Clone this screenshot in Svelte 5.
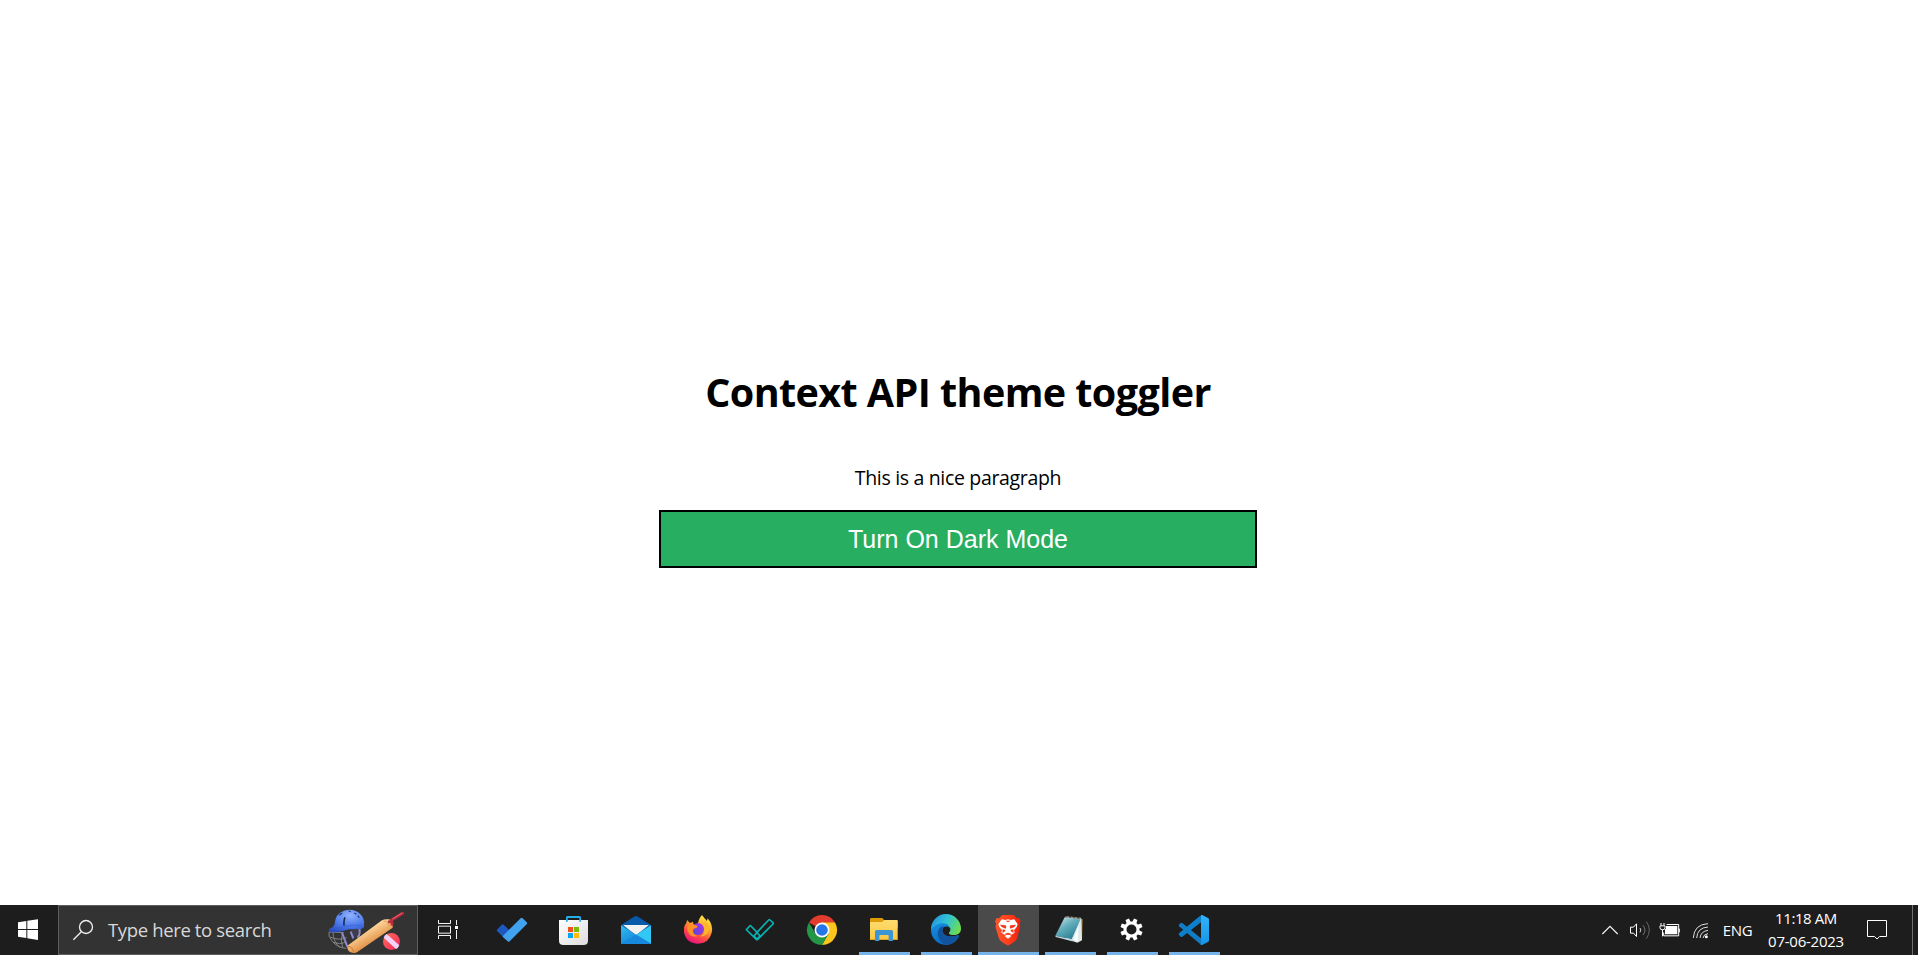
<script>
  let dark = $state(false);
</script>

<div class="screen">
  <main class:dark>
    <section class="panel">
      <h1>Context API theme toggler</h1>
      <p>This is a nice paragraph</p>
      <button onclick={() => (dark = !dark)}>Turn {dark ? 'Off' : 'On'} Dark Mode</button>
    </section>
  </main>

  <footer class="taskbar">
    <div class="start">
      <svg width="58" height="50" viewBox="0 30 174 150">
        <path fill="#fff" d="M54 82l25-4v24H54zM82 77.500l32-4.500v29H82zM54 105h25v24l-25-4zM82 105h32v30l-32-5z" />
      </svg>
    </div>

    <div class="search">
      <svg class="glass" width="50" height="48" viewBox="177 33 150 144">
        <g fill="none" stroke="#f0f0f0" stroke-width="4">
          <circle cx="258" cy="96" r="19.500" /><path d="M244 110l-24 24" />
        </g>
      </svg>
      <span>Type here to search</span>
      <svg class="cricket" width="80" height="48" viewBox="321 33 240 144">
        <defs>
          <radialGradient id="helmet" cx=".6" cy=".25" r=".8"><stop offset="0" stop-color="#8fb2ff" /><stop offset=".6" stop-color="#4c78ea" /><stop offset="1" stop-color="#2c50c4" /></radialGradient>
          <linearGradient id="bat" x1="0" y1="0" x2=".6" y2=".8"><stop offset="0" stop-color="#e89a4c" /><stop offset=".5" stop-color="#ffd49a" /><stop offset="1" stop-color="#d98233" /></linearGradient>
          <linearGradient id="ball" x1="0" y1="0" x2="1" y2="1"><stop offset="0" stop-color="#ff7058" /><stop offset="1" stop-color="#f4245c" /></linearGradient>
        </defs>
        <path d="M327 111q-4 12 10 28 16 20 42 21M339 112q0 28 22 46M330 126q28 12 50 2M340 142q18 8 38 0M368 112q-8 24 0 46M327 111l44 2" fill="none" stroke="#8d9193" stroke-width="2.500" />
        <path d="M392 104q12-2 24-4 4 18-8 26l-12 8z" fill="#3c3d49" />
        <path d="M366 113l16 42M417 97q6 16-4 31M392 110l8 20" fill="none" stroke="#8f87cc" stroke-width="6" />
        <path d="M327 104q14-8 17-18 2-30 28-39 28-8 46 8 18 14 14 40-1 6-10 7-38-2-56 7-24 5-39 1z" fill="url(#helmet)" />
        <path d="M328 100q26 3 48-6 20-6 50-3" fill="none" stroke="#3560cf" stroke-width="2" />
        <path d="M375 67q-4 8-3 25" fill="none" stroke="#14264f" stroke-width="4.500" />
        <path d="M358 61q4-6 9-6M386 47l6 3M403 54l6 4M413 62l5 6" fill="none" stroke="#1c3674" stroke-width="3.500" />
        <path d="M382 152L486 76q8-5 20-3 12 2 12 12v13L412 171q-8 6-22 0-9-6-8-19z" fill="url(#bat)" />
        <path d="M490 78q14 0 19 17" fill="none" stroke="#d58a44" stroke-width="2" />
        <path d="M384 154q15 2 17 18" fill="none" stroke="#c67a35" stroke-width="3" />
        <path d="M508 80q10-2 8 8M515 75l33-20" fill="none" stroke="#b92d3e" stroke-width="9" stroke-linecap="round" />
        <path d="M517 72l29-18" stroke="#f36069" stroke-width="3" />
        <circle cx="514.500" cy="139.500" r="25.500" fill="url(#ball)" />
        <path d="M491 128q3-8 9-11l38 34q-3 8-10 11z" fill="#f3d3fa" />
      </svg>
    </div>

    <nav class="apps">
      <div class="app">
        <svg width="63" height="50" viewBox="594 30 189 150">
          <path d="M655.500 75v10.500h36V75M655.500 132v-10.500h36V132M655.500 93.500h36v21h-36zM709.500 75v15M709.500 105v27" fill="none" stroke="#f4f4f4" stroke-width="3" />
          <path d="M705 93h9v9h-9z" fill="#fff" />
        </svg>
      </div>
      <div class="app">
        <svg width="62" height="50" viewBox="3 30 186 150">
          <path d="M51 104l14-15q3-3 6 0l25 24-16 20q-4 1-7-3l-21-21q-3-2-1-5z" fill="#1e57bd" />
          <path d="M69 122l53-52q3-3 6 0l12 12q3 3 0 6l-51 51q-3 3-6 0l-14-13q-2-2 0-4z" fill="#41a2ef" />
        </svg>
      </div>
      <div class="app">
        <svg width="62" height="50" viewBox="189 30 186 150">
          <defs><linearGradient id="bag" x1="0" y1="0" x2="1" y2="1"><stop stop-color="#fff" /><stop offset="1" stop-color="#dcdcdc" /></linearGradient></defs>
          <path d="M237 75h87v62q0 13-13 13h-61q-13 0-13-13z" fill="url(#bag)" />
          <path d="M260.500 80V68q0-2 2-2h36q2 0 2 2v12" fill="none" stroke="#24aeea" stroke-width="5.500" />
          <path d="M264 96h15v15h-15z" fill="#f25022" /><path d="M282 96h15v15h-15z" fill="#7fba00" />
          <path d="M264 114h15v15h-15z" fill="#00a4ef" /><path d="M282 114h15v15h-15z" fill="#ffb900" />
        </svg>
      </div>
      <div class="app">
        <svg width="62" height="50" viewBox="375 30 186 150">
          <defs><linearGradient id="mail" x1="0" y1="0" x2=".8" y2="1"><stop stop-color="#2fc0f4" /><stop offset="1" stop-color="#0d72cf" /></linearGradient></defs>
          <path d="M423 90l39-25q6-4 12 0l39 25v20h-90z" fill="#0859a8" />
          <path d="M429 90h78l-39 31z" fill="#f1f1f1" />
          <path d="M423 91l90 56h-90z" fill="url(#mail)" />
          <path d="M513 91v56l-45-28z" fill="#31c8f5" />
          <path d="M423 147l45-28 45 28z" fill="#1688dd" />
        </svg>
      </div>
      <div class="app">
        <svg width="62" height="50" viewBox="21 30 186 150">
          <defs>
            <linearGradient id="fox" x1=".8" y1="0" x2=".3" y2="1"><stop stop-color="#fff04a" /><stop offset=".38" stop-color="#ffab27" /><stop offset=".68" stop-color="#ff5140" /><stop offset="1" stop-color="#e80d87" /></linearGradient>
            <linearGradient id="globe" x1="1" y1="0" x2="0" y2="1"><stop stop-color="#b432e3" /><stop offset="1" stop-color="#5147d9" /></linearGradient>
          </defs>
          <path d="M126 60q7 10 15 18l2-8q18 22 12 43-8 32-41 33-35 0-42-34-2-19 7-28l2-9 9 9 9-4q0 8 4 11l11 3q-1-21 12-34z" fill="url(#fox)" />
          <circle cx="114" cy="102" r="18" fill="url(#globe)" />
          <path d="M83 91q10-7 20-2l11 5q-5 8-14 8-4 17 13 21-21 7-30-14-3-9 0-18z" fill="#ff9127" />
          <path d="M112 83q18-2 21 17 3 18-13 25 28-3 27-26-2-14-12-22-3 2-1 9-8-6-22-3z" fill="#ffb52c" />
        </svg>
      </div>
      <div class="app">
        <svg width="62" height="50" viewBox="207 30 186 150">
          <g fill="none" stroke="#08b3b1" stroke-width="5" stroke-linejoin="round">
            <path d="M260 103l9-10q2-2 4 0l18 19 35-37q2-2 4 0l9 8q2 2 0 4l-46 46q-2 2-4 0l-29-28q-2-1 0-2z" />
            <path d="M282 123l9-10 9 10-9 9z" />
          </g>
        </svg>
      </div>
      <div class="app">
        <svg width="62" height="50" viewBox="393 30 186 150">
          <path d="M486 105L447 82.500A45 45 0 0 1 525 82.500z" fill="#e33b2e" />
          <path d="M486 82.500h39A45 45 0 0 1 486 150l19.500-34z" fill="#fcc51c" />
          <path d="M447 82.500l19.500 33.700q10 14 39 0L486 150A45 45 0 0 1 447 82.500z" fill="#239746" />
          <circle cx="486" cy="105" r="22.500" fill="#fff" /><circle cx="486" cy="105" r="17.500" fill="#2676e9" />
        </svg>
      </div>
      <div class="app open">
        <svg width="62" height="50" viewBox="39 30 186 150">
          <defs><linearGradient id="folder" x1="0" y1="0" x2="0" y2="1"><stop stop-color="#ffdc70" /><stop offset="1" stop-color="#f9c842" /></linearGradient></defs>
          <path d="M90 73q0-4 4-4h31q3 0 5 3l2 4h38q3 0 3 3v20H90z" fill="#dd9b08" />
          <path d="M90 81h36l7-6h37q3 0 3 3v54q0 3-3 3H93q-3 0-3-3z" fill="url(#folder)" />
          <path d="M90 132h83v3H90z" fill="#e2a51f" />
          <path d="M105 138v-28q0-5 5-5h44q5 0 5 5v28h-13v-16q0-2-3-2h-22q-3 0-3 2v16z" fill="#3c96d4" />
        </svg>
      </div>
      <div class="app open">
        <svg width="62" height="50" viewBox="225 30 186 150">
          <defs>
            <linearGradient id="edgeTop" x1="0" y1=".3" x2="1" y2=".7"><stop stop-color="#2295df" /><stop offset=".45" stop-color="#30c2d4" /><stop offset="1" stop-color="#72df49" /></linearGradient>
            <linearGradient id="edgeSide" x1=".2" y1="0" x2=".6" y2="1"><stop stop-color="#168ee0" /><stop offset="1" stop-color="#0867bd" /></linearGradient>
          </defs>
          <path d="M273 105C273 75 325 78 331 99C322 90 306 94 307 107C308 121 328 130 353 121Q358 120 356 126C348 142 333 150 318 150A45 45 0 0 1 273 105z" fill="url(#edgeSide)" />
          <path d="M312 93C290 96 284 128 314 149.500Q343 151 356 126Q358 120 353 121C328 130 308 121 307 107Q306 98 312 93z" fill="#11549d" />
          <path d="M273 103A45 45 0 0 1 363 101C363 116 350 121 337 120Q326 119 327 113Q332 108 331 101C326 82 296 76 273 103z" fill="url(#edgeTop)" />
        </svg>
      </div>
      <div class="app open active">
        <svg width="62" height="50" viewBox="411 30 186 150">
          <defs><linearGradient id="brave"><stop stop-color="#ff552c" /><stop offset=".5" stop-color="#ff401b" /><stop offset="1" stop-color="#ed210d" /></linearGradient></defs>
          <path d="M487 60h34l10 10 7-1 4 10-3 8 2 7-9 34q-2 8-10 13l-14 9q-4 2-8 0l-14-9q-8-5-10-13l-10-34 3-7-4-8 5-10 7 1z" fill="url(#brave)" />
          <path d="M485 73l11 2 8-2 8 2 11-2 10 15-3 8-8 10 2 7-10 6-10-5-10 5-10-6 2-7-8-10-3-8z" fill="#fff" />
          <path d="M504 117l10 6-10 8-10-8z" fill="#fff" />
          <path d="M480 89l17 2 2 4-2 6-12-5zM528 89l-17 2-2 4 2 6 12-5zM488 103l9 2-4 6-6 2zM520 103l-9 2 4 6 6 2zM496 77h16l-8 5zM495 116l9-3 9 3-9 4z" fill="#f43a1b" />
        </svg>
      </div>
      <div class="app open">
        <svg width="62" height="50" viewBox="57 30 186 150">
          <defs><linearGradient id="note" x1="0" y1="0" x2=".7" y2="1"><stop stop-color="#d7eff2" /><stop offset=".45" stop-color="#67b0bd" /><stop offset="1" stop-color="#237b91" /></linearGradient></defs>
          <path d="M181 70l7 3-2 60-15 8z" fill="#a97925" />
          <path d="M181 70l3 2 2 64-14 7-34-12z" fill="#dfe9e9" />
          <path d="M134 67l48 5-27 61-49-11z" fill="url(#note)" />
          <path d="M106 122l49 11 8 5-7 1-49-13z" fill="#bfd8dc" />
          <path d="M160 134l16-42-3 48z" fill="#fbffff" />
          <path d="M137 66l47 5" stroke="#d2c9b6" stroke-width="6" stroke-dasharray="2 2" />
        </svg>
      </div>
      <div class="app open">
        <svg width="62" height="50" viewBox="243 30 186 150">
          <circle cx="334.500" cy="103.500" r="19.500" fill="none" stroke="#fff" stroke-width="9" />
          {#each [22.5, 67.5, 112.5, 157.5, 202.5, 247.500, 292.5, 337.5] as angle}
            <path d="M328 82l1-12h11l1 12z" fill="#fff" transform="rotate({angle} 334.500 103.500)" />
          {/each}
        </svg>
      </div>
      <div class="app open">
        <svg width="62" height="50" viewBox="429 30 186 150">
          <defs><linearGradient id="code" x1="0" y1="0" x2="0" y2="1"><stop stop-color="#32b4f7" /><stop offset="1" stop-color="#1694e8" /></linearGradient></defs>
          <path d="M543 130l-56-46q-3-2-5 0l-5 5q-2 3 0 5l67 56z" fill="#127bc4" />
          <path d="M477 115q-2 3 0 5l5 5q3 2 5 0l58-45V60l-10 7z" fill="#0d7fcb" />
          <path d="M543 60q2-1 5 1l16 8q3 1 3 5v62q0 4-3 5l-16 8q-4 2-7-1l2-4z" fill="url(#code)" />
        </svg>
      </div>
    </nav>

    <div class="tray">
      <svg width="30" height="50" viewBox="45 30 90 150"><path d="M67 117l23-23 23 23" fill="none" stroke="#f4f4f4" stroke-width="3.500" /></svg>
      <svg width="30" height="50" viewBox="135 30 90 150">
        <g fill="none" stroke-width="3">
          <path d="M151.500 96.500h9l9-10v38l-9-10h-9z" stroke="#fff" />
          <path d="M180 99q5 6 0 13" stroke="#d0d0d0" />
          <path d="M189 91q12 14 0 29" stroke="#777" />
          <path d="M199 80q18 25 0 51" stroke="#656565" />
        </g>
      </svg>
      <svg width="30" height="50" viewBox="225 30 90 150">
        <path d="M260 88.500h36v34h-45v-10M298 101v11M243 84v7M252 84v7M240 92.500h15v6q0 6-7.500 6t-7.500-6zM247.500 104v20" fill="none" stroke="#fff" stroke-width="3" />
        <path d="M258 93h34v25h-37v-15l3-2z" fill="#fff" />
      </svg>
      <svg width="30" height="50" viewBox="315 30 90 150">
        <g fill="none" stroke="#ddd" stroke-width="3">
          <path d="M340 129q2-41 44-43M350 129q2-31 34-33M360 129q2-20 24-23" />
          <path d="M369 129q2-12 15-13" />
        </g>
        <circle cx="379" cy="125" r="4.500" fill="#fff" />
      </svg>
      <span class="lang">ENG</span>
      <div class="clock"><span class="time">11:18 AM</span><span class="date">07-06-2023</span></div>
      <svg width="50" height="50" viewBox="336 30 150 150">
        <path d="M382.500 76.500h57v48h-21l-7.500 7.500-7.500-7.500h-21z" fill="none" stroke="#fff" stroke-width="3" />
      </svg>
      <div class="peek"></div>
    </div>
  </footer>
</div>

<style>
  :global(body) { margin: 0; overflow: hidden; }
  .screen { height: 955px; display: flex; flex-direction: column; }
  main { flex: 1; display: flex; justify-content: center; padding-right: 2px; background: #fff; color: #000; font-family: "Segoe UI", "Open Sans", sans-serif; }
  main.dark { background: #222; color: #fff; }
  .panel { width: 598px; padding-top: 365px; display: flex; flex-direction: column; text-align: center; box-sizing: border-box; }
  h1 { margin: 0; font-size: 39.500px; line-height: 54px; font-weight: 700; letter-spacing: -.58px; white-space: nowrap; }
  p { margin: 45px 0 0; font-size: 19.500px; line-height: 28px; letter-spacing: -.33px; }
  button { margin: 18px 0 0; height: 58px; padding: 0; border: 2px solid #000; background: #27ae60; color: #fff; font: 25px/54px "Liberation Sans", Arial, sans-serif; }
  .taskbar { height: 50px; display: flex; background: #1d1d1d; color: #fff; font-family: "Segoe UI", "Open Sans", sans-serif; }
  svg { display: block; flex: none; }
  .start { width: 58px; }
  .search { width: 360px; height: 50px; box-sizing: border-box; display: flex; align-items: center; background: #333; border: 1px solid #5e5e5e; }
  .search span { width: 218px; font-size: 18.500px; line-height: 24px; letter-spacing: -.36px; margin-left: -1px; padding-right: 1px; color: #d8d8d8; white-space: nowrap; }
  .apps { display: flex; }
  .app { display: grid; justify-items: center; }
  .app > svg, .open::after { grid-area: 1 / 1; }
  .open::after { content: ''; align-self: end; width: 51px; height: 3px; background: #76b3eb; }
  .active { background: linear-gradient(90deg, transparent 1px, #4a4a4a 1px); }
  .active::after { width: 61px; justify-self: end; }
  .tray { margin-left: auto; display: flex; align-items: center; font-size: 15px; }
  .lang { width: 45px; text-align: center; letter-spacing: -.3px; }
  .clock { width: 92px; display: flex; flex-direction: column; text-align: center; line-height: 23px; letter-spacing: -.4px; }
  .date { letter-spacing: -.25px; }
  .peek { width: 5px; height: 50px; margin-left: 10px; border-left: 1px solid #707070; }
</style>
